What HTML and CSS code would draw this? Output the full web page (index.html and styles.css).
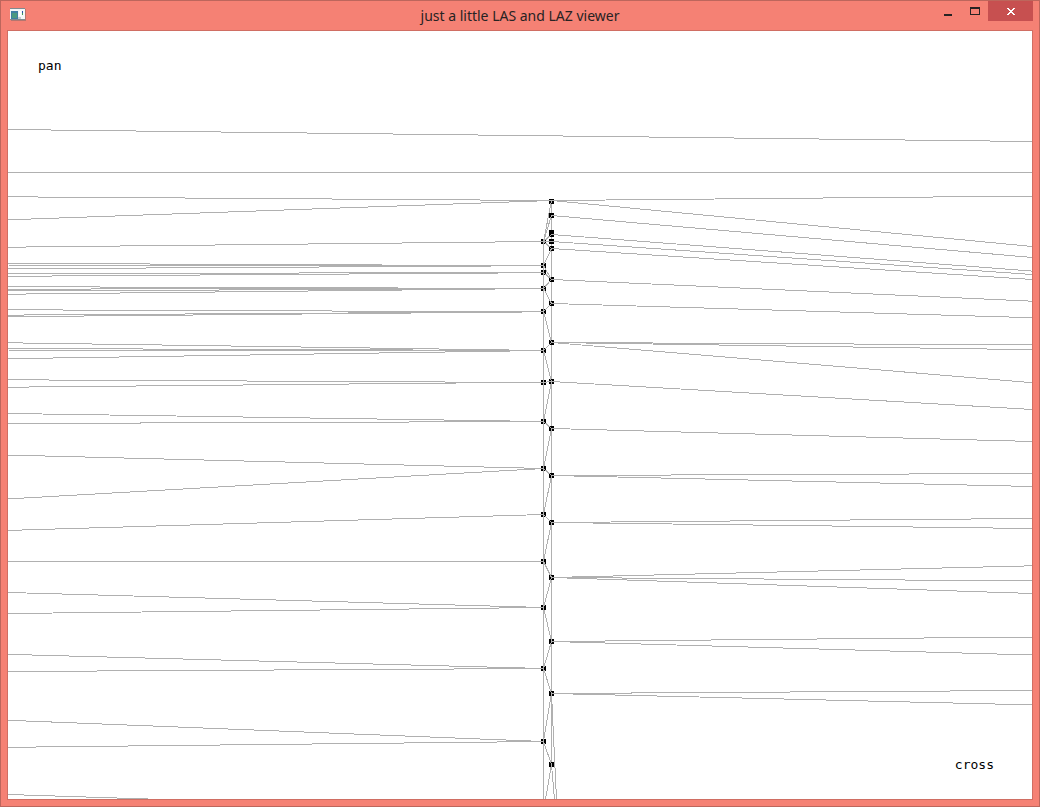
FILE: index.html
```html
<!DOCTYPE html>
<html lang="en">
<head>
    <meta charset="UTF-8">
    <meta name="viewport" content="width=device-width, initial-scale=1.0">
    <title>just a little LAS and LAZ viewer</title>
    <link rel="stylesheet" href="styles.css">
</head>
<body>

    <div class="window">
        <header class="titlebar">
            <svg class="app-icon" width="16" height="14" viewBox="0 0 16 14" shape-rendering="crispEdges">
                <rect x="1" y="1" width="15" height="12" fill="#b5756e"/>
                <rect width="15" height="12" fill="#7e8a90"/>
                <rect y="1" width="15" height="10" fill="#f4f6f7"/>
                <rect x="1" y="3" width="7" height="8" fill="#3f7fa3"/>
                <rect x="2" y="5" width="5" height="5" fill="#4b9a80"/>
                <rect x="9" y="3" width="2" height="5" fill="#ffffff"/>
                <rect x="8" y="9" width="3" height="2" fill="#c9cccf"/>
                <rect x="12" y="3" width="1" height="2" fill="#2c50a8"/>
                <rect x="12" y="5" width="1" height="2" fill="#3f9a58"/>
            </svg>
            <h1>just a little LAS and LAZ viewer</h1>
            <div class="controls">
                <button type="button" aria-label="Minimize">
                    <svg width="10" height="9" viewBox="0 0 10 9" shape-rendering="crispEdges">
                        <rect x="1" y="7" width="8" height="2" fill="#272323"/>
                    </svg>
                </button>
                <button type="button" aria-label="Maximize">
                    <svg width="10" height="8" viewBox="0 0 10 8" shape-rendering="crispEdges">
                        <path d="M0 0H10V8H0ZM1 2V7H9V2Z" fill="#272323" fill-rule="evenodd"/>
                    </svg>
                </button>
                <button type="button" class="close" aria-label="Close">
                    <svg width="8" height="7" viewBox="0 0 8 7" shape-rendering="crispEdges">
                        <path d="M0 0h2v1h1v1h2v-1h1v-1h2v1h-1v1h-1v1h-1v1h1v1h1v1h1v1h-2v-1h-1v-1h-2v1h-1v1h-2v-1h1v-1h1v-1h1v-1h-1v-1h-1v-1h-1z" fill="#fff"/>
                    </svg>
                </button>
            </div>
        </header>

        <main class="viewport">
            <svg class="scene" viewBox="0 0 1024 768" preserveAspectRatio="none">
                <defs>
                    <rect id="p" x="-2" y="-2" width="5" height="5"/>
                </defs>

                <g class="edges" transform="translate(.5 .5)">
                    <path d="M543 169V733"/>
                </g>

                <!-- points -->
                <g class="points">
                    <use href="#p" x="543" y="170"/>
                    <use href="#p" x="543" y="184"/>
                    <use href="#p" x="543" y="201"/>
                    <use href="#p" x="543" y="203"/>
                    <use href="#p" x="543" y="210"/>
                    <use href="#p" x="543" y="217"/>
                    <use href="#p" x="543" y="248"/>
                    <use href="#p" x="543" y="272"/>
                    <use href="#p" x="543" y="311"/>
                    <use href="#p" x="543" y="350"/>
                    <use href="#p" x="543" y="397"/>
                    <use href="#p" x="543" y="444"/>
                    <use href="#p" x="543" y="491"/>
                    <use href="#p" x="543" y="546"/>
                    <use href="#p" x="543" y="610"/>
                    <use href="#p" x="543" y="662"/>
                    <use href="#p" x="543" y="733"/>
                    <use href="#p" x="535" y="210"/>
                    <use href="#p" x="535" y="234"/>
                    <use href="#p" x="535" y="241"/>
                    <use href="#p" x="535" y="257"/>
                    <use href="#p" x="535" y="280"/>
                    <use href="#p" x="535" y="319"/>
                    <use href="#p" x="535" y="351"/>
                    <use href="#p" x="535" y="390"/>
                    <use href="#p" x="535" y="437"/>
                    <use href="#p" x="535" y="483"/>
                    <use href="#p" x="535" y="530"/>
                    <use href="#p" x="535" y="576"/>
                    <use href="#p" x="535" y="637"/>
                    <use href="#p" x="535" y="710"/>
                </g>

                <!-- triangle edges -->
                <g class="edges" transform="translate(.5 .5)">
                    <path d="M-1 98L1024 110M-1 141H1024"/>
                    <path d="M0 165.3L543 169M0 188.3L543 169M0 215.7L535 210"/>
                    <path d="M0 231.9L535 234.2M0 234H535M0 237.3L535 234.2"/>
                    <path d="M0 242.1L535 241M0 244.8L535 241.2"/>
                    <path d="M0 255.2L535 257M0 257.6L535 257M0 259.3L535 257.3M0 262.7L535 257"/>
                    <path d="M0 278.3L535 280.3M0 283.6L535 280.3M0 285.2L535 280.3"/>
                    <path d="M0 311.3L535 319M0 317L535 319M0 319H535M0 327.2L535 319"/>
                    <path d="M0 348.3L535 351M0 355.7L535 350.7"/>
                    <path d="M0 382L535 390M0 392L535 390"/>
                    <path d="M0 423.6L535 437M0 467.4L535 437"/>
                    <path d="M0 498.9L535 483M-1 530H535"/>
                    <path d="M0 561L535 576M0 582L535 576"/>
                    <path d="M0 622.9L535 637M0 640L535 637"/>
                    <path d="M0 688.8L535 710M0 715.8L535 710M0 763L155 768"/>

                    <path d="M543 169L1024 164.6M543 169L1024 215"/>
                    <path d="M543 184L1024 226M543 203L1024 239.6M543 210L1024 243M543 217L1024 248"/>
                    <path d="M543 248L1024 269.7M543 272L1024 286.2"/>
                    <path d="M543 311L1024 313.4M543 311L1024 318.2M543 311L1024 351.2"/>
                    <path d="M543 350L1024 378M543 397L1024 410"/>
                    <path d="M543 444L1024 442M543 444L1024 455"/>
                    <path d="M543 491L1024 487M543 491L1024 497"/>
                    <path d="M543 546L1024 534.3M543 546L1024 549.4M543 546L1024 562"/>
                    <path d="M543 610L1024 605.5M543 610L1024 623.5"/>
                    <path d="M543 662L1024 659M543 662L1024 673.4"/>

                    <!-- left column and the strip between the two -->
                    <path d="M535 210V768"/>
                    <path d="M543 169L535 210L543 184M543 203L535 210H543M535 210L543 217L535 234L543 248L535 241"/>
                    <path d="M543 248L535 257L543 272L535 280L543 311L535 319L543 350L535 351"/>
                    <path d="M543 350L535 390L543 397L535 437L543 444L535 483L543 491L535 530L543 546"/>
                    <path d="M543 546L535 576L543 610L535 637L543 662L535 710L543 733L537 768"/>
                    <path d="M543 662L548 768M543 733L546 768"/>
                </g>
            </svg>
            <span class="label mode">pan</span>
            <span class="label view">cross</span>
        </main>
    </div>

</body>
</html>
```

FILE: styles.css
```css
* {
    box-sizing: border-box;
}
body {
    margin: 0;
}
.window {
    display: flex;
    flex-direction: column;
    height: 100vh;
    padding: 0 6px 6px;
    background-color: #f58174;
    border: 1px solid #bd665c;
}
.titlebar {
    display: grid;
    grid-template-columns: 1fr auto 1fr;
    align-items: start;
    height: 29px;
    flex: none;
}
.app-icon {
    margin: 7px 3px 0;
}
.titlebar h1 {
    margin: 0;
    font: 14px/30px "Noto Sans", "Open Sans", sans-serif;
    color: #272323;
}
.controls {
    display: flex;
    justify-content: flex-end;
}
.controls button {
    display: flex;
    align-items: center;
    justify-content: center;
    width: 27px;
    height: 20px;
    padding: 0;
    background: none;
    border: none;
}
.controls .close {
    width: 45px;
    background-color: #c75050;
}
.viewport {
    position: relative;
    flex: 1;
    min-height: 0;
    background-color: white;
    border: 1px solid #d06e63;
}
.scene {
    display: block;
    width: 100%;
    height: 100%;
    shape-rendering: crispEdges;
}
.edges path {
    fill: none;
    stroke: #b0b0b0;
    stroke-width: 1;
}
.label {
    position: absolute;
    font: 13px/16px "DejaVu Sans Mono", monospace;
    color: black;
}
.mode {
    top: 27px;
    left: 30px;
}
.view {
    right: 38px;
    bottom: 26px;
}
```
